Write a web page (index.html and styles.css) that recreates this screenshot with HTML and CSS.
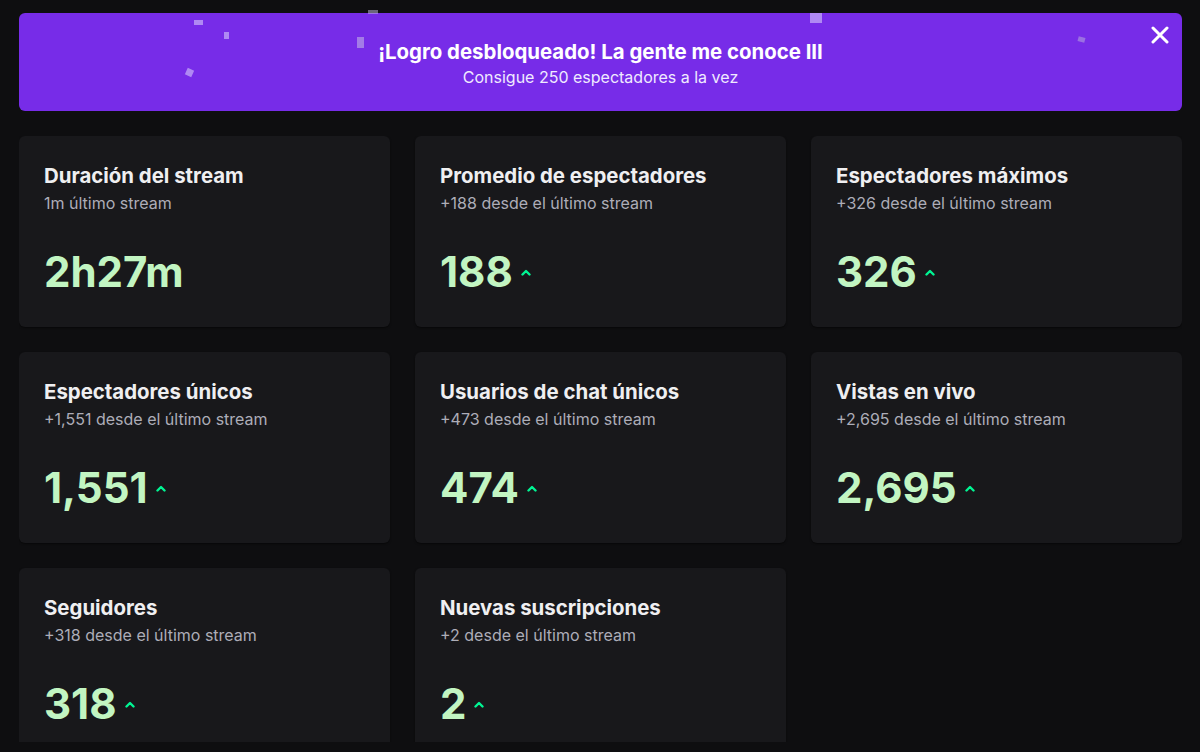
FILE: index.html
```html
<!DOCTYPE html>
<html>

<head>
  <meta name="viewport" content="width=device-width, initial-scale=1.0" />
  <title>Resumen del stream</title>

  <link rel="stylesheet" href="styles.css">
</head>

<body>
  <div id="page">
    <div class="banner">
      <span class="confetti c1"></span>
      <span class="confetti c2"></span>
      <span class="confetti c3"></span>
      <span class="confetti c4"></span>
      <span class="confetti c5"></span>
      <span class="confetti c6"></span>
      <span class="confetti c7"></span>
      <h2 class="banner-title">¡Logro desbloqueado! La gente me conoce III</h2>
      <p class="banner-sub">Consigue 250 espectadores a la vez</p>
      <button class="close" aria-label="Cerrar">
        <svg width="18" height="18" viewBox="0 0 18 18"><path d="M2 2L16 16M16 2L2 16" stroke="#fff" stroke-width="3" stroke-linecap="round"/></svg>
      </button>
    </div>

    <div class="stats">
      <div class="card">
        <h3 class="card-title">Duración del stream</h3>
        <p class="card-sub">1m último stream</p>
        <div class="value"><span>2h27m</span></div>
      </div>
      <div class="card">
        <h3 class="card-title">Promedio de espectadores</h3>
        <p class="card-sub">+188 desde el último stream</p>
        <div class="value"><span>188</span><svg class="up" width="10" height="7" viewBox="0 0 10 7"><path d="M1.5 5.5L5 2L8.5 5.5" fill="none" stroke="#00f593" stroke-width="2.4" stroke-linecap="round" stroke-linejoin="round"/></svg></div>
      </div>
      <div class="card">
        <h3 class="card-title">Espectadores máximos</h3>
        <p class="card-sub">+326 desde el último stream</p>
        <div class="value"><span>326</span><svg class="up" width="10" height="7" viewBox="0 0 10 7"><path d="M1.5 5.5L5 2L8.5 5.5" fill="none" stroke="#00f593" stroke-width="2.4" stroke-linecap="round" stroke-linejoin="round"/></svg></div>
      </div>
      <div class="card">
        <h3 class="card-title">Espectadores únicos</h3>
        <p class="card-sub">+1,551 desde el último stream</p>
        <div class="value"><span>1,551</span><svg class="up" width="10" height="7" viewBox="0 0 10 7"><path d="M1.5 5.5L5 2L8.5 5.5" fill="none" stroke="#00f593" stroke-width="2.4" stroke-linecap="round" stroke-linejoin="round"/></svg></div>
      </div>
      <div class="card">
        <h3 class="card-title">Usuarios de chat únicos</h3>
        <p class="card-sub">+473 desde el último stream</p>
        <div class="value"><span>474</span><svg class="up" width="10" height="7" viewBox="0 0 10 7"><path d="M1.5 5.5L5 2L8.5 5.5" fill="none" stroke="#00f593" stroke-width="2.4" stroke-linecap="round" stroke-linejoin="round"/></svg></div>
      </div>
      <div class="card">
        <h3 class="card-title">Vistas en vivo</h3>
        <p class="card-sub">+2,695 desde el último stream</p>
        <div class="value"><span>2,695</span><svg class="up" width="10" height="7" viewBox="0 0 10 7"><path d="M1.5 5.5L5 2L8.5 5.5" fill="none" stroke="#00f593" stroke-width="2.4" stroke-linecap="round" stroke-linejoin="round"/></svg></div>
      </div>
      <div class="card">
        <h3 class="card-title">Seguidores</h3>
        <p class="card-sub">+318 desde el último stream</p>
        <div class="value"><span>318</span><svg class="up" width="10" height="7" viewBox="0 0 10 7"><path d="M1.5 5.5L5 2L8.5 5.5" fill="none" stroke="#00f593" stroke-width="2.4" stroke-linecap="round" stroke-linejoin="round"/></svg></div>
      </div>
      <div class="card">
        <h3 class="card-title">Nuevas suscripciones</h3>
        <p class="card-sub">+2 desde el último stream</p>
        <div class="value"><span>2</span><svg class="up" width="10" height="7" viewBox="0 0 10 7"><path d="M1.5 5.5L5 2L8.5 5.5" fill="none" stroke="#00f593" stroke-width="2.4" stroke-linecap="round" stroke-linejoin="round"/></svg></div>
      </div>
    </div>
  </div>
</body>

</html>
```

FILE: styles.css
```css
body {
  margin: 0;
  background-color: #0e0e10;
  color: #efeff1;
  font-family: Inter, "Noto Sans", sans-serif;
  overflow: hidden;
}

#page {
  padding: 13px 18px 0 19px;
  height: 752px;
  box-sizing: border-box;
}

/* achievement banner */
.banner {
  position: relative;
  height: 98px;
  background-color: #772ce8;
  border-radius: 6px;
  display: flex;
  flex-direction: column;
  align-items: center;
  justify-content: center;
  padding-top: 4px;
  box-sizing: border-box;
}

.banner-title {
  margin: 0;
  font-size: 20.4px;
  font-weight: 700;
  line-height: 26px;
  color: #fff;
}

.banner-sub {
  margin: 0;
  font-size: 16px;
  line-height: 24px;
  color: #f0eaff;
}

.close {
  position: absolute;
  top: 11px;
  right: 11px;
  width: 22px;
  height: 22px;
  padding: 0;
  border: none;
  background: none;
  display: flex;
  align-items: center;
  justify-content: center;
}

.confetti {
  position: absolute;
  background-color: rgba(214, 200, 250, 0.6);
}
.c1 { left: 175px; top: 7px; width: 9px; height: 5px; }
.c2 { left: 205px; top: 19px; width: 5px; height: 7px; }
.c3 { left: 338px; top: 24px; width: 7px; height: 11px; background-color: rgba(200, 190, 230, 0.55); }
.c4 { left: 167px; top: 56px; width: 7px; height: 7px; transform: rotate(25deg); }
.c5 { left: 349px; top: -3px; width: 10px; height: 4px; background-color: rgba(200, 190, 230, 0.5); }
.c6 { left: 791px; top: 0; width: 12px; height: 10px; }
.c7 { left: 1059px; top: 24px; width: 7px; height: 5px; background-color: rgba(190, 180, 220, 0.5); transform: rotate(15deg); }

/* stat cards */
.stats {
  margin-top: 25px;
  height: 606px;
  overflow: hidden;
  display: grid;
  grid-template-columns: repeat(3, 1fr);
  grid-auto-rows: 191px;
  gap: 25px;
}

.card {
  background-color: #18181b;
  border-radius: 6px;
  padding: 25px;
  box-shadow: 0 1px 2px rgba(0, 0, 0, 0.5);
}

.card-title {
  margin: 0;
  font-size: 20.4px;
  font-weight: 700;
  line-height: 30px;
  color: #efeff1;
}

.card-sub {
  margin: 2px 0 0;
  font-size: 16px;
  line-height: 20px;
  color: #adadb8;
}

.value {
  margin-top: 30px;
  display: flex;
  align-items: center;
  gap: 8px;
  height: 56px;
  font-size: 42px;
  font-weight: 700;
  color: #c2f5c2;
}

.value .up {
  margin-top: 2px;
}
```
